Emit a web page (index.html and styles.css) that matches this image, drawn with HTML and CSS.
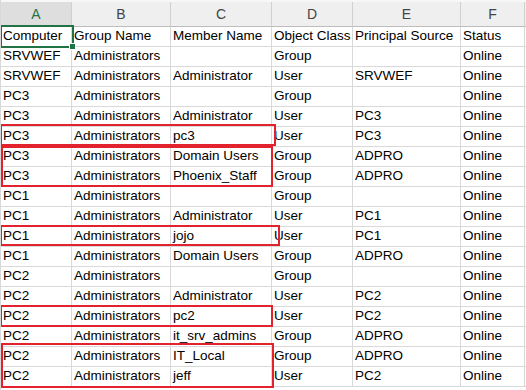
FILE: index.html
```html
<!DOCTYPE html>
<html>
<head>
<meta charset="utf-8">
<link rel="stylesheet" href="styles.css">
</head>
<body>
<div class="sheet">
  <div class="row head">
    <div class="hc sel">A</div><div class="hc">B</div><div class="hc">C</div><div class="hc">D</div><div class="hc">E</div><div class="hc">F</div><div class="hc"></div>
  </div>
  <div class="row"><div class="c">Computer</div><div class="c">Group Name</div><div class="c">Member Name</div><div class="c">Object Class</div><div class="c">Principal Source</div><div class="c">Status</div><div class="c"></div></div>
  <div class="row"><div class="c">SRVWEF</div><div class="c">Administrators</div><div class="c"></div><div class="c">Group</div><div class="c"></div><div class="c">Online</div><div class="c"></div></div>
  <div class="row"><div class="c">SRVWEF</div><div class="c">Administrators</div><div class="c">Administrator</div><div class="c">User</div><div class="c">SRVWEF</div><div class="c">Online</div><div class="c"></div></div>
  <div class="row"><div class="c">PC3</div><div class="c">Administrators</div><div class="c"></div><div class="c">Group</div><div class="c"></div><div class="c">Online</div><div class="c"></div></div>
  <div class="row"><div class="c">PC3</div><div class="c">Administrators</div><div class="c">Administrator</div><div class="c">User</div><div class="c">PC3</div><div class="c">Online</div><div class="c"></div></div>
  <div class="row"><div class="c">PC3</div><div class="c">Administrators</div><div class="c">pc3</div><div class="c">User</div><div class="c">PC3</div><div class="c">Online</div><div class="c"></div></div>
  <div class="row"><div class="c">PC3</div><div class="c">Administrators</div><div class="c">Domain Users</div><div class="c">Group</div><div class="c">ADPRO</div><div class="c">Online</div><div class="c"></div></div>
  <div class="row"><div class="c">PC3</div><div class="c">Administrators</div><div class="c">Phoenix_Staff</div><div class="c">Group</div><div class="c">ADPRO</div><div class="c">Online</div><div class="c"></div></div>
  <div class="row"><div class="c">PC1</div><div class="c">Administrators</div><div class="c"></div><div class="c">Group</div><div class="c"></div><div class="c">Online</div><div class="c"></div></div>
  <div class="row"><div class="c">PC1</div><div class="c">Administrators</div><div class="c">Administrator</div><div class="c">User</div><div class="c">PC1</div><div class="c">Online</div><div class="c"></div></div>
  <div class="row"><div class="c">PC1</div><div class="c">Administrators</div><div class="c">jojo</div><div class="c">User</div><div class="c">PC1</div><div class="c">Online</div><div class="c"></div></div>
  <div class="row"><div class="c">PC1</div><div class="c">Administrators</div><div class="c">Domain Users</div><div class="c">Group</div><div class="c">ADPRO</div><div class="c">Online</div><div class="c"></div></div>
  <div class="row"><div class="c">PC2</div><div class="c">Administrators</div><div class="c"></div><div class="c">Group</div><div class="c"></div><div class="c">Online</div><div class="c"></div></div>
  <div class="row"><div class="c">PC2</div><div class="c">Administrators</div><div class="c">Administrator</div><div class="c">User</div><div class="c">PC2</div><div class="c">Online</div><div class="c"></div></div>
  <div class="row"><div class="c">PC2</div><div class="c">Administrators</div><div class="c">pc2</div><div class="c">User</div><div class="c">PC2</div><div class="c">Online</div><div class="c"></div></div>
  <div class="row"><div class="c">PC2</div><div class="c">Administrators</div><div class="c">it_srv_admins</div><div class="c">Group</div><div class="c">ADPRO</div><div class="c">Online</div><div class="c"></div></div>
  <div class="row"><div class="c">PC2</div><div class="c">Administrators</div><div class="c">IT_Local</div><div class="c">Group</div><div class="c">ADPRO</div><div class="c">Online</div><div class="c"></div></div>
  <div class="row"><div class="c">PC2</div><div class="c">Administrators</div><div class="c">jeff</div><div class="c">User</div><div class="c">PC2</div><div class="c">Online</div><div class="c"></div></div>

  <div class="selection"><span class="handle"></span></div>
  <div class="mark m1"></div>
  <div class="mark m2"></div>
  <div class="mark m3"></div>
  <div class="mark m4"></div>
  <div class="mark m5"></div>
</div>
</body>
</html>
```

FILE: styles.css
```css
html, body {
  margin: 0;
  padding: 0;
  background: #ffffff;
}
body {
  font-family: "Liberation Sans", Arial, sans-serif;
  font-size: 13.5px;
  color: #000000;
  overflow: hidden;
}
.sheet {
  position: relative;
  width: 526px;
  height: 390px;
  overflow: hidden;
  border-left: 1px solid #d9d9d9;
  box-sizing: border-box;
}
.row {
  display: grid;
  grid-template-columns: 71px 99px 101px 81px 108px 64px 10px;
}
.head {
  height: 27px;
  background: #efefef;
  border-top: 2px solid #f7f7f7;
  box-sizing: border-box;
}
.hc {
  border-right: 1px solid #d0d0d0;
  border-bottom: 1px solid #bdbdbd;
  text-align: center;
  line-height: 24px;
  color: #444444;
  font-size: 14px;
}
.hc.sel {
  background: #dedede;
  color: #217346;
}
.c {
  height: 20px;
  box-sizing: border-box;
  border-right: 1px solid #d9d9d9;
  border-bottom: 1px solid #d9d9d9;
  padding-left: 2px;
  line-height: 18px;
  white-space: nowrap;
  overflow: hidden;
}
.selection {
  position: absolute;
  left: -1px;
  top: 25px;
  width: 74px;
  height: 23px;
  border: 2px solid #217346;
  box-sizing: border-box;
}
.handle {
  position: absolute;
  right: -4px;
  bottom: -4px;
  width: 5px;
  height: 5px;
  background: #217346;
  border: 1px solid #ffffff;
}
.mark {
  position: absolute;
  border: 2px solid #e2222d;
  box-sizing: border-box;
}
.m1 { left: -1px; top: 124px; width: 276px; height: 22px; }
.m2 { left: 0px; top: 146px; width: 272px; height: 41px; }
.m3 { left: -1px; top: 225px; width: 280px; height: 21px; }
.m4 { left: -1px; top: 305px; width: 273px; height: 22px; }
.m5 { left: 0px; top: 343px; width: 273px; height: 45px; }
```
